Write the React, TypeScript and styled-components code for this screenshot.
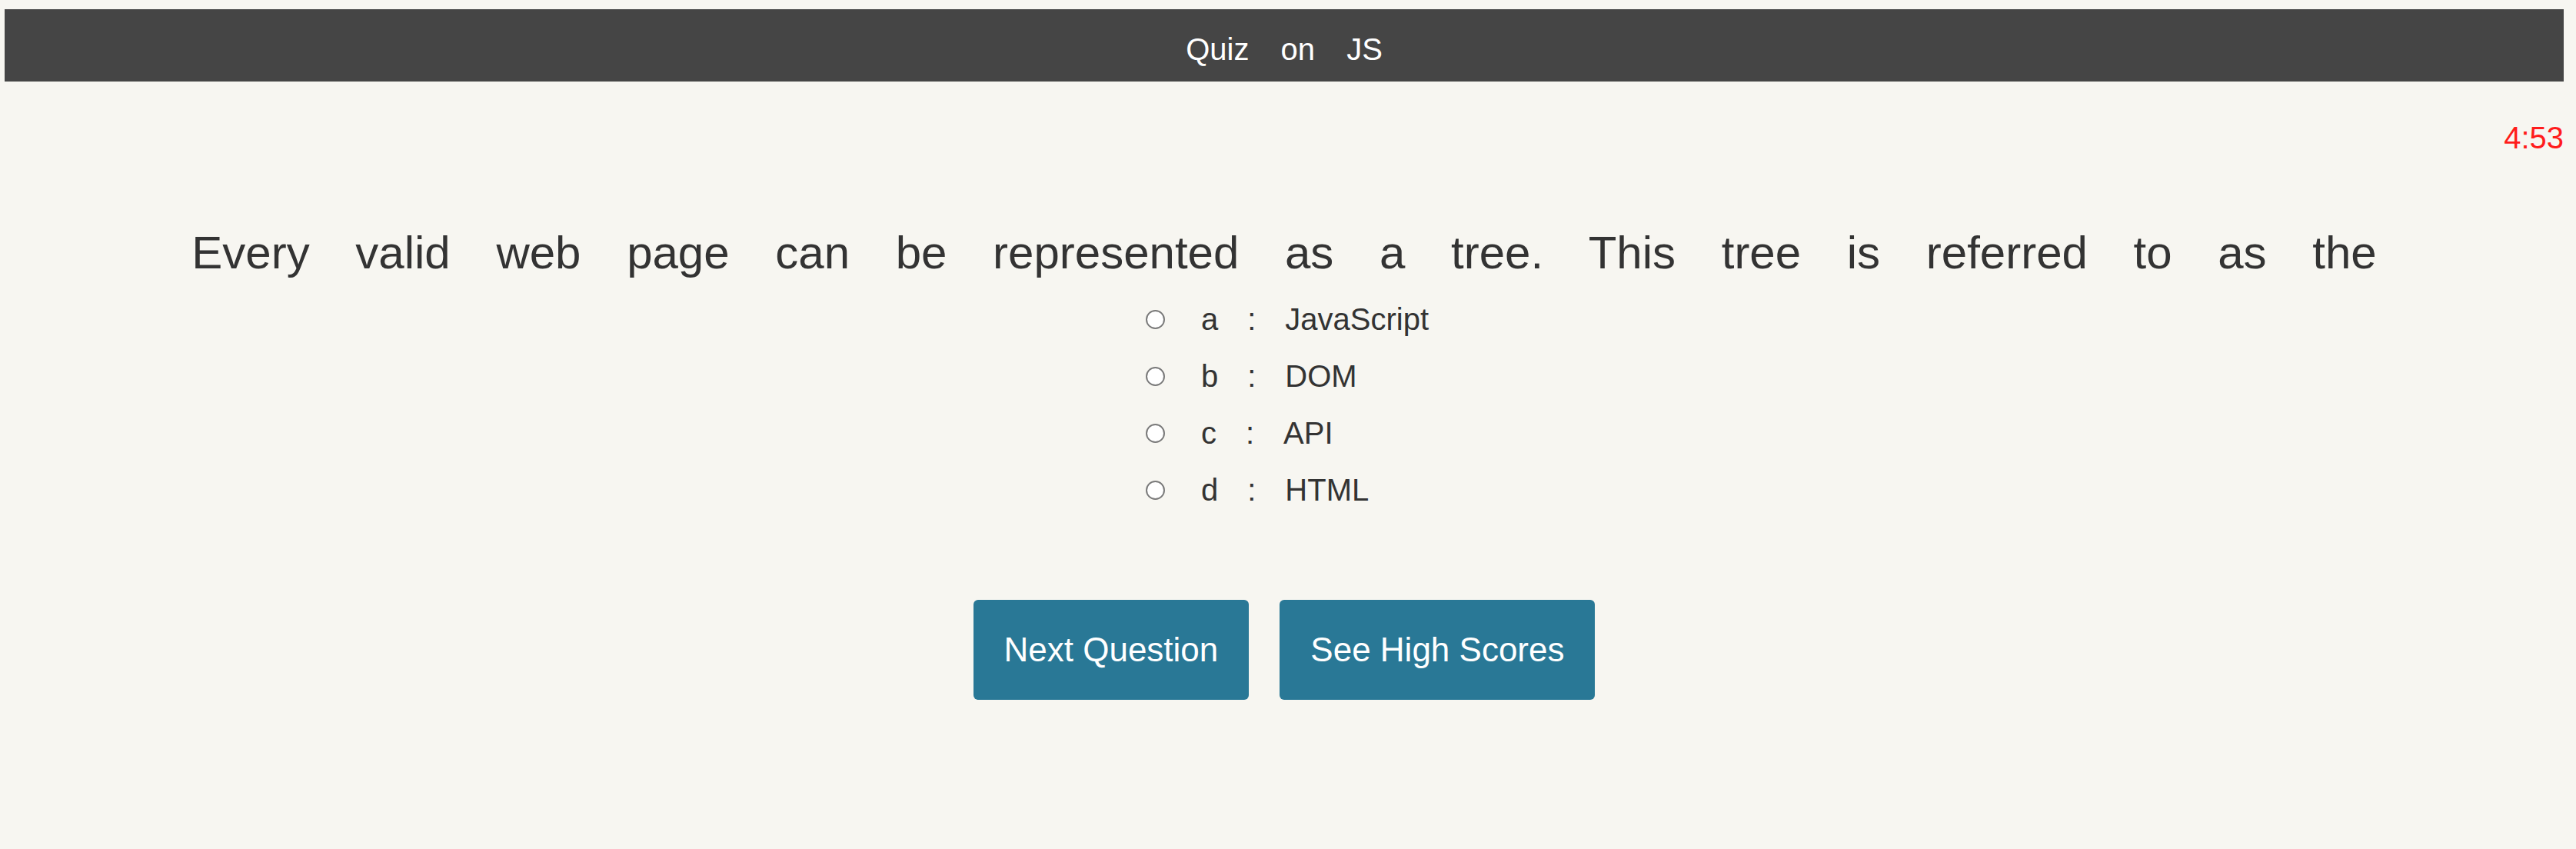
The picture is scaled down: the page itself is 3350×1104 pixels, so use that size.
import styled, { createGlobalStyle } from "styled-components";

const GlobalStyle = createGlobalStyle`
  html, body {
    margin: 0;
    padding: 0;
    background: #f7f6f1;
  }
  body {
    font-family: "Liberation Sans", Arial, Helvetica, sans-serif;
    color: #333333;
  }
`;

const Page = styled.div`
  display: flex;
  flex-direction: column;
  padding: 12px 16px 0 6px;
  min-height: 1104px;
  box-sizing: border-box;
`;

const Header = styled.header`
  background: #454545;
  color: #ffffff;
  font-size: 40px;
  word-spacing: 30px;
  text-align: center;
  height: 94px;
  box-sizing: border-box;
  padding-top: 29px;
  line-height: 46px;
`;

const Timer = styled.div`
  align-self: flex-end;
  color: #ff1c1c;
  font-size: 40px;
  line-height: 46px;
  margin-top: 50px;
`;

const Question = styled.h2`
  margin: 92px 0 0;
  font-weight: normal;
  font-size: 60px;
  word-spacing: 43px;
  line-height: 69px;
  text-align: center;
`;

const Options = styled.ul`
  list-style: none;
  margin: 29px 0 0 8px;
  padding: 0;
  align-self: center;
  display: flex;
  flex-direction: column;
  gap: 28px;
`;

const Option = styled.li`
  display: flex;
  align-items: center;
  font-size: 40px;
  line-height: 46px;
`;

const Radio = styled.input`
  appearance: none;
  -webkit-appearance: none;
  margin: 0;
  width: 25px;
  height: 25px;
  border-radius: 50%;
  border: 2px solid #7a7a7a;
  background: #ffffff;
  box-sizing: border-box;
  flex: none;
`;

const OptionText = styled.label`
  display: flex;
  margin-left: 47px;
  white-space: pre;
`;

const Colon = styled.span`
  margin-left: 38px;
`;

const Answer = styled.span`
  margin-left: 38px;
`;

const Actions = styled.div`
  display: flex;
  justify-content: center;
  gap: 40px;
  margin-top: 120px;
`;

const Button = styled.button`
  font-family: "Liberation Sans", Arial, Helvetica, sans-serif;
  font-size: 44px;
  line-height: 50px;
  color: #ffffff;
  background: #297896;
  border: none;
  border-radius: 6px;
  padding: 40px 40px;
  cursor: pointer;
`;

const options = [
  { key: "a", text: "JavaScript" },
  { key: "b", text: "DOM" },
  { key: "c", text: "API" },
  { key: "d", text: "HTML" },
];

export default function App() {
  return (
    <>
      <GlobalStyle />
      <Page>
        <Header>Quiz on JS</Header>
        <Timer>4:53</Timer>
        <Question>
          Every valid web page can be represented as a tree. This tree is
          referred to as the
        </Question>
        <Options>
          {options.map((o) => (
            <Option key={o.key}>
              <Radio type="radio" name="answer" id={`opt-${o.key}`} />
              <OptionText htmlFor={`opt-${o.key}`}>
                <span>{o.key}</span>
                <Colon>:</Colon>
                <Answer>{o.text}</Answer>
              </OptionText>
            </Option>
          ))}
        </Options>
        <Actions>
          <Button>Next Question</Button>
          <Button>See High Scores</Button>
        </Actions>
      </Page>
    </>
  );
}
